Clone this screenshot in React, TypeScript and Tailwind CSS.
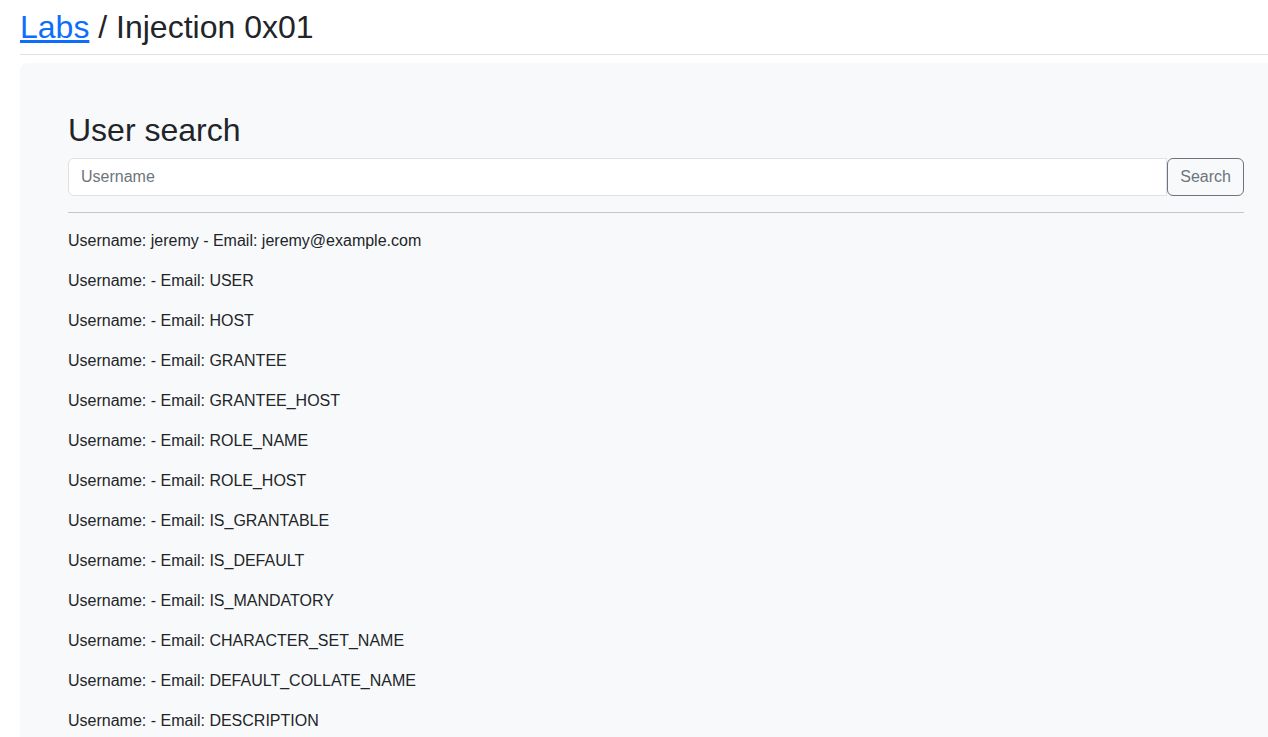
import React from "react";

const results = [
	{ user: "jeremy", email: "jeremy@example.com" },
	{ user: "", email: "USER" },
	{ user: "", email: "HOST" },
	{ user: "", email: "GRANTEE" },
	{ user: "", email: "GRANTEE_HOST" },
	{ user: "", email: "ROLE_NAME" },
	{ user: "", email: "ROLE_HOST" },
	{ user: "", email: "IS_GRANTABLE" },
	{ user: "", email: "IS_DEFAULT" },
	{ user: "", email: "IS_MANDATORY" },
	{ user: "", email: "CHARACTER_SET_NAME" },
	{ user: "", email: "DEFAULT_COLLATE_NAME" },
	{ user: "", email: "DESCRIPTION" },
];

const App = () => {
	const [query, setQuery] = React.useState<string>("");

	return (
		<div className="min-h-screen bg-white text-[#212529] font-['Liberation_Sans',Arial,sans-serif]">
			<div className="ml-[20px] pt-[8px] pb-[8px] border-b border-[#dee2e6]">
				<h2 className="text-[32px] leading-[1.2] font-normal">
					<a href="#" className="text-[#0d6efd] underline">
						Labs
					</a>{" "}
					/ Injection 0x01
				</h2>
			</div>
			<div className="ml-[20px] mt-[8px] rounded-l-lg bg-[#f8f9fa] pl-12 pr-6 pt-12 pb-12">
				<h2 className="text-[32px] leading-[1.2] font-normal mb-2">User search</h2>
				<form className="flex" onSubmit={(e) => e.preventDefault()}>
					<input
						className="flex-1 h-[38px] px-3 text-base bg-white border border-[#dee2e6] rounded-l-md placeholder:text-[#6c757d] outline-none"
						placeholder="Username"
						value={query}
						onChange={(e) => setQuery(e.target.value)}
					/>
					<button
						type="submit"
						className="h-[38px] px-3 text-base text-[#6c757d] border border-[#6c757d] rounded-md"
					>
						Search
					</button>
				</form>
				<hr className="my-4 border-0 border-t border-[#c6c7c8]" />
				{results.map((r, i) => (
					<p key={i} className="text-base leading-6 mb-4">
						Username: {r.user} - Email: {r.email}
					</p>
				))}
			</div>
		</div>
	);
};

export default App;
